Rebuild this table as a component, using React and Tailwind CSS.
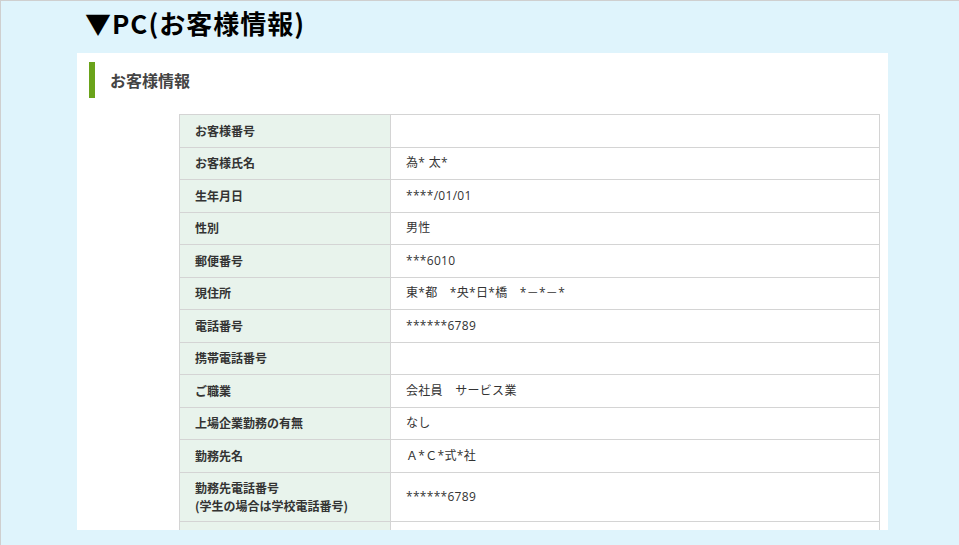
const rows = [
  { label: "お客様番号", value: "" },
  { label: "お客様氏名", value: "為* 太*" },
  { label: "生年月日", value: "****/01/01" },
  { label: "性別", value: "男性" },
  { label: "郵便番号", value: "***6010" },
  { label: "現住所", value: "東*都　*央*日*橋　*－*－*" },
  { label: "電話番号", value: "******6789" },
  { label: "携帯電話番号", value: "" },
  { label: "ご職業", value: "会社員　サービス業" },
  { label: "上場企業勤務の有無", value: "なし" },
  { label: "勤務先名", value: "Ａ*Ｃ*式*社" },
  { label: ["勤務先電話番号", "(学生の場合は学校電話番号)"], value: "******6789", tall: true },
  { label: "", value: "" },
];

function InfoRow({ label, value, tall }) {
  return (
    <div className={`flex border-b border-[#d4d4d4] ${tall ? "h-[49px]" : "h-[32.5px]"}`}>
      <div className="w-[211px] shrink-0 bg-[#e8f3ec] border-r border-[#d4d4d4] pl-[15px] flex flex-col justify-center font-bold text-[12px] leading-[18px] text-[#333]">
        {Array.isArray(label) ? label.map((l) => <span key={l}>{l}</span>) : <span>{label}</span>}
      </div>
      <div
        className="flex-1 pl-[15px] flex items-center text-[12px] text-[#333] tracking-[0.3px]"
        style={{ fontFamily: '"Open Sans", "Noto Sans CJK JP", sans-serif' }}
      >
        {value}
      </div>
    </div>
  );
}

export default function App() {
  return (
    <div
      className="w-[959px] h-[545px] bg-[#dff4fc] border-t border-l border-[#cfcfcf] overflow-hidden"
      style={{ fontFamily: '"Noto Sans CJK JP", "Noto Sans", sans-serif' }}
    >
      {/* Page title */}
      <div className="h-[52px] pl-[84px] pb-[8px] flex items-center">
        <h1 className="text-[26px] font-bold text-black leading-none tracking-[1px]">▼PC(お客様情報)</h1>
      </div>

      {/* Panel */}
      <div className="ml-[76px] w-[811px] h-[477px] bg-white overflow-hidden pt-[9px] pl-[12px] pr-[8px]">
        <div className="h-[36px] border-l-[6px] border-[#6aa31a] pl-[15px] flex items-center">
          <h2 className="text-[16px] font-bold text-[#444]">お客様情報</h2>
        </div>

        <div className="mt-[16px] ml-[90px] border-t border-l border-r border-[#d4d4d4]">
          {rows.map((r, i) => (
            <InfoRow key={i} {...r} />
          ))}
        </div>
      </div>
    </div>
  );
}
